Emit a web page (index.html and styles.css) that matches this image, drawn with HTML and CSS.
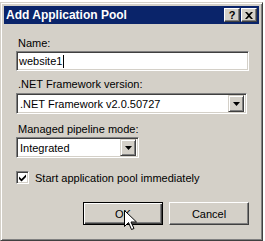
FILE: index.html
```html
<!DOCTYPE html>
<html lang="en">
<head>
  <meta charset="UTF-8">
  <title>Add Application Pool</title>
  <link rel="stylesheet" href="styles.css">
</head>
<body>
  <div class="dialog">
    <div class="titlebar">
      <span class="title">Add Application Pool</span>
      <div class="caption-buttons">
        <span class="cap-btn help">?</span>
        <span class="cap-btn close">
          <svg width="8" height="7" viewBox="0 0 8 7"><path d="M0 0h2l2 2 2-2h2L5 3.5 8 7H6L4 5 2 7H0l3-3.5z" fill="#000"/></svg>
        </span>
      </div>
    </div>

    <div class="content">
      <label class="field-label">Name:</label>
      <div class="textbox"><span>website1</span><span class="caret"></span></div>

      <label class="field-label second">.NET Framework version:</label>
      <div class="combo wide">
        <span class="combo-text">.NET Framework v2.0.50727</span>
        <span class="combo-btn"><svg width="7" height="4" viewBox="0 0 7 4"><path d="M0 0h7L3.5 4z" fill="#000"/></svg></span>
      </div>

      <label class="field-label third">Managed pipeline mode:</label>
      <div class="combo narrow">
        <span class="combo-text">Integrated</span>
        <span class="combo-btn"><svg width="7" height="4" viewBox="0 0 7 4"><path d="M0 0h7L3.5 4z" fill="#000"/></svg></span>
      </div>

      <div class="check-row">
        <span class="checkbox"><svg width="9" height="9" viewBox="0 0 9 9"><path d="M1 3.5l2.5 2.5 4.5-4.5v2.5l-4.5 4.5-2.5-2.5z" fill="#000"/></svg></span>
        <span>Start application pool immediately</span>
      </div>

      <div class="buttons">
        <button class="btn default">OK</button>
        <button class="btn">Cancel</button>
      </div>
    </div>

    <svg class="cursor" width="13" height="21" viewBox="0 0 13 21">
      <path d="M0.5 0.5v16l4-4 3 7 2.5-1-3-6.5h5.5z" fill="#fff" stroke="#000" stroke-width="1"/>
    </svg>
  </div>
</body>
</html>
```

FILE: styles.css
```css
body {
  margin: 0;
  width: 265px;
  height: 241px;
  overflow: hidden;
  background: #ffffff;
  font-family: "Liberation Sans", Arial, sans-serif;
  font-size: 11px;
  color: #000;
}

.dialog {
  position: relative;
  margin-top: 2px;
  width: 263px;
  height: 239px;
  box-sizing: border-box;
  background: #D4D0C8;
  border: 1px solid;
  border-color: #D4D0C8 #404040 #404040 #D4D0C8;
  box-shadow: inset 1px 1px #ffffff, inset -1px -1px #808080;
  padding: 3px;
}

.titlebar {
  height: 18px;
  background: #0A246A;
  display: flex;
  align-items: center;
  justify-content: space-between;
  padding: 0 2px;
}

.title {
  color: #fff;
  font-weight: bold;
  font-size: 12px;
}

.caption-buttons {
  display: flex;
  gap: 1px;
}

.cap-btn {
  width: 16px;
  height: 14px;
  box-sizing: border-box;
  background: #D4D0C8;
  border: 1px solid;
  border-color: #ffffff #404040 #404040 #ffffff;
  box-shadow: inset -1px -1px #808080;
  display: flex;
  align-items: center;
  justify-content: center;
  font-weight: bold;
  font-size: 11px;
  line-height: 11px;
}

.content {
  padding: 0 10px 0 12px;
  display: flex;
  flex-direction: column;
}

.field-label {
  display: block;
  line-height: 13px;
  margin-top: 13px;
  margin-left: 2px;
  margin-bottom: 1px;
}

.field-label.second {
  margin-top: 7px;
  margin-bottom: 2px;
}

.field-label.third {
  margin-top: 9px;
  margin-bottom: 1px;
}

.textbox, .combo {
  height: 20px;
  box-sizing: border-box;
  background: #ffffff;
  border: 1px solid;
  border-color: #808080 #ffffff #ffffff #808080;
  box-shadow: inset 1px 1px #404040, inset -1px -1px #D4D0C8;
  display: flex;
  align-items: center;
  padding-left: 2px;
}

.caret {
  width: 1px;
  height: 13px;
  background: #000;
  margin-left: 1px;
}

.combo {
  height: 21px;
  padding: 2px;
  justify-content: space-between;
}

.combo.wide {
  width: 231px;
}

.combo.narrow {
  width: 123px;
}

.combo-text {
  padding-left: 1px;
}

.combo-btn {
  width: 16px;
  height: 17px;
  box-sizing: border-box;
  background: #D4D0C8;
  border: 1px solid;
  border-color: #D4D0C8 #404040 #404040 #D4D0C8;
  box-shadow: inset 1px 1px #ffffff, inset -1px -1px #808080;
  display: flex;
  align-items: center;
  justify-content: center;
}

.check-row {
  display: flex;
  align-items: center;
  gap: 6px;
  margin-top: 13px;
  height: 13px;
}

.checkbox {
  width: 13px;
  height: 13px;
  box-sizing: border-box;
  background: #ffffff;
  border: 1px solid;
  border-color: #808080 #ffffff #ffffff #808080;
  box-shadow: inset 1px 1px #404040, inset -1px -1px #D4D0C8;
  display: flex;
  align-items: center;
  justify-content: center;
}

.buttons {
  display: flex;
  justify-content: flex-end;
  gap: 6px;
  margin-top: 18px;
}

.btn {
  width: 80px;
  height: 23px;
  box-sizing: border-box;
  background: #D4D0C8;
  font-family: "Liberation Sans", Arial, sans-serif;
  font-size: 11px;
  color: #000;
  border: 1px solid;
  border-color: #ffffff #404040 #404040 #ffffff;
  box-shadow: inset -1px -1px #808080;
  padding: 0;
}

.btn.default {
  border-color: #000;
  box-shadow: inset 1px 1px #ffffff, inset -1px -1px #404040, inset -2px -2px #808080;
}

.cursor {
  position: absolute;
  left: 123px;
  top: 207px;
}
```
